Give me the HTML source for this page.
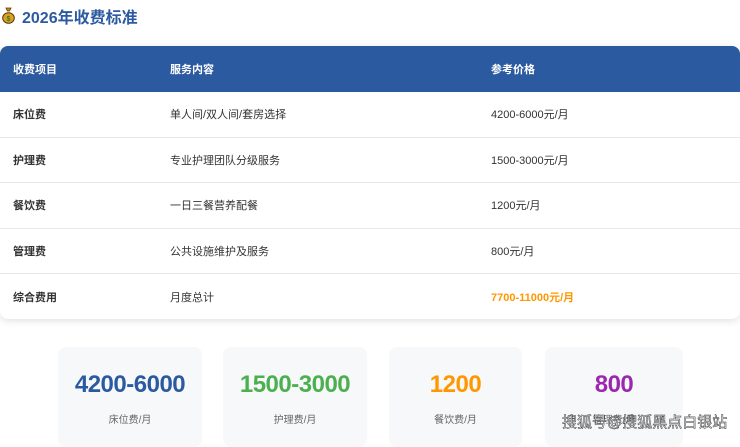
<!DOCTYPE html>
<html><head><meta charset="utf-8"><style>
*{margin:0;padding:0;box-sizing:border-box}
body{width:740px;height:438px;overflow:hidden;background:#fff;font-family:"Liberation Sans","Noto Sans CJK SC",sans-serif;position:relative}
.title{position:absolute;left:22px;top:4px;font-size:16px;font-weight:bold;color:#2c5aa0}
.icon{position:absolute;left:2px;top:7px;width:13px;height:17px}
.tbl{position:absolute;left:0;top:46px;width:740px;height:273px;border-radius:8px;box-shadow:0 2px 8px rgba(0,0,0,.12);overflow:hidden;background:#fff}
.row{position:relative;height:45.5px;border-bottom:1px solid #e8e8e8;font-size:11px;color:#333}
.row span{position:absolute;top:50%;transform:translateY(-50%)}
.row .a{left:13px;font-weight:bold}.row .b{left:170px}.row .c{left:491px}
.hd{background:#2c5aa0;color:#fff;height:46px;border:none}
.hd span{font-weight:bold}
.last{border:none}
.card{position:absolute;top:347px;height:100px;background:#f7f8fa;border-radius:8px;text-align:center}
.card .n{margin-top:24px;font-size:24px;font-weight:bold;line-height:28px;letter-spacing:-0.5px}
.card .l{margin-top:12px;font-size:10px;color:#666}
.wm{position:absolute;left:562px;top:411px;font-size:15px;color:#fff;-webkit-text-stroke:0.5px #333}
</style></head><body>
<svg class="icon" viewBox="0 0 13 17"><path d="M4 1h5l-1.5 3h-2z" fill="#c88a1a" stroke="#5a3a00" stroke-width="0.8"/><ellipse cx="6.5" cy="11" rx="5.8" ry="5.3" fill="#e0a020" stroke="#5a3a00" stroke-width="1"/><text x="6.5" y="14" font-size="7" text-anchor="middle" fill="#2a7a2a" font-weight="bold" font-family="Liberation Sans">$</text></svg>
<div class="title">2026年收费标准</div>
<div class="tbl">
<div class="row hd"><span class="a">收费项目</span><span class="b">服务内容</span><span class="c">参考价格</span></div>
<div class="row"><span class="a">床位费</span><span class="b">单人间/双人间/套房选择</span><span class="c">4200-6000元/月</span></div>
<div class="row"><span class="a">护理费</span><span class="b">专业护理团队分级服务</span><span class="c">1500-3000元/月</span></div>
<div class="row"><span class="a">餐饮费</span><span class="b">一日三餐营养配餐</span><span class="c">1200元/月</span></div>
<div class="row"><span class="a">管理费</span><span class="b">公共设施维护及服务</span><span class="c">800元/月</span></div>
<div class="row last"><span class="a">综合费用</span><span class="b">月度总计</span><span class="c" style="color:#ff9800;font-weight:bold">7700-11000元/月</span></div>
</div>
<div class="card" style="left:58px;width:144px"><div class="n" style="color:#2c5aa0">4200-6000</div><div class="l">床位费/月</div></div>
<div class="card" style="left:223px;width:144px"><div class="n" style="color:#4caf50">1500-3000</div><div class="l">护理费/月</div></div>
<div class="card" style="left:389px;width:133px"><div class="n" style="color:#ff9800">1200</div><div class="l">餐饮费/月</div></div>
<div class="card" style="left:545px;width:138px"><div class="n" style="color:#9c27b0">800</div><div class="l">管理费/月</div></div>
<div class="wm">搜狐号@搜狐黑点白银站</div>
</body></html>
